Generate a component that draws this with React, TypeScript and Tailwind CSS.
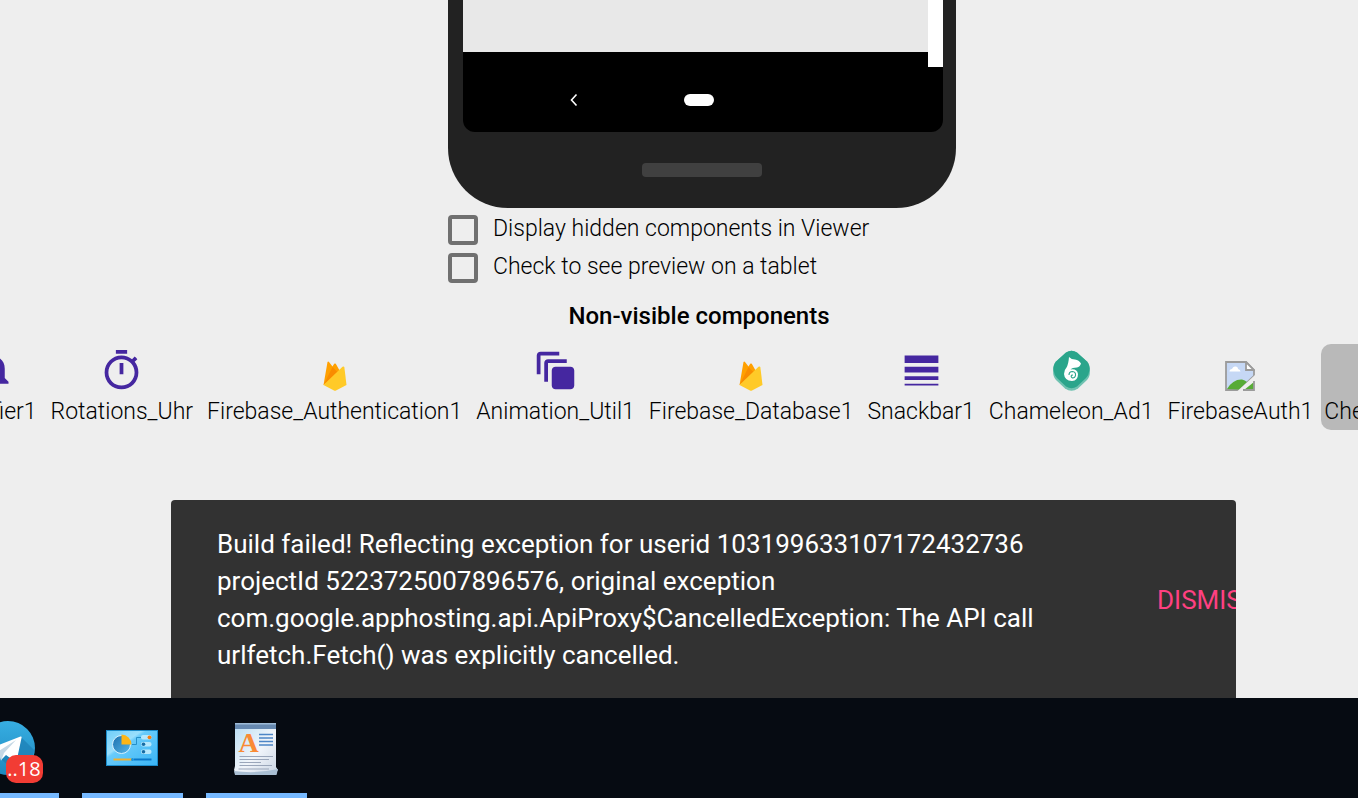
import React from 'react';

type IconProps = { className?: string };

function MaterialIcon({ d }: { d: string }) {
  return (
    <svg viewBox="0 0 24 24" className="h-[45px] w-[45px] fill-[#4527a0]" aria-hidden="true">
      <path d={d} />
    </svg>
  );
}

function FirebaseIcon() {
  return (
    <svg viewBox="0 0 30 30" className="h-[30px] w-[30px]" aria-hidden="true">
      <path d="M3.500 24 7.500 1Q8.200 -.2 9.200 1.200L12.500 5.500L14.200 2.800Q15 2 15.800 2.800L19 8.500L22 12Z" fill="#ffa000" />
      <path d="M3.500 24 12.500 6 17.500 11Z" fill="#f98c00" />
      <path d="M3.500 24 22.500 5.800Q24 4.800 24.400 6.500L26.500 24 16 29.500Q15 30 14 29.500Z" fill="#ffca28" />
    </svg>
  );
}

function ChameleonIcon() {
  return (
    <svg viewBox="0 0 45 45" className="h-[45px] w-[45px]" aria-hidden="true">
      <path d="M17 4.500Q22.500 .8 28 4.500L38 13.500Q41 17 41 23Q41 29 38 32L29 40.500Q22.500 45 16 40.500L7 32Q4 29 4 23Q4 17 7 13.500Z" fill="#6fc2b1" />
      <path d="M17 4.500Q22.500 .8 28 4.500L38 13.500Q41 17 40.500 22Q40 27 37 30L28 38.500Q22.500 42 17 38.500L8 30Q5 27 4.500 22Q4 17 7 13.500Z" fill="#2aa58b" />
      <path d="M20 9Q22.500 11.500 26 11.500Q30 12 32 15.500Q31 19 28 19.500Q23 19.500 21.500 21.500Q28 20.500 29 26Q29 32.500 23 33Q15.500 32.500 15 26Q15 22 17.500 19.500Q19.500 16 20 9Z" fill="#fff" />
      <path d="M20 27Q20 23.500 23.500 23.500Q27 24 26.500 27.500Q26 30 23.500 30Q21.500 29 22.500 27.200L24 27" fill="none" stroke="#2aa58b" strokeWidth="1.100" />
    </svg>
  );
}

function BrokenImageIcon() {
  return (
    <svg viewBox="0 0 30 30" className="h-[30px] w-[30px]" aria-hidden="true">
      <path d="M1 1H21L29 9V15L14 29H1Z" fill="#c6d8f5" stroke="#9b9b9b" strokeWidth="1.8" />
      <path d="M2 28Q8 18 17 18.500Q20 19 22 21L14 28.500Z" fill="#57ab36" />
      <path d="M4.500 10.500Q4.500 8 7 8Q8 5 10.500 5.500Q13 5.500 13 8Q15.500 8.500 15.500 10.500Z" fill="#fff" />
      <path d="M21 1V9H29Z" fill="#fff" stroke="#9b9b9b" strokeWidth="1.8" />
      <path d="M30 14 12.500 30H18.500L30 20Z" fill="#eee" />
      <path d="M29 21V29H19Z" fill="#57ab36" />
      <path d="M29 20V29H18" fill="none" stroke="#9b9b9b" strokeWidth="1.8" />
    </svg>
  );
}

function TelegramIcon({ className }: IconProps) {
  return (
    <svg viewBox="0 0 54 54" className={className} aria-hidden="true">
      <defs>
        <linearGradient id="telegram" x2="0" y2="1">
          <stop stopColor="#37aee2" />
          <stop offset="1" stopColor="#1e88be" />
        </linearGradient>
      </defs>
      <circle cx="27" cy="27" r="27" fill="url(#telegram)" />
      <path d="M40 16 53 29Q51 45 35 52L20 38Z" fill="#1c7fb5" opacity=".7" />
      <path d="M10 27 39.500 15.500Q41 15 40.500 17L36 38Q35 41 32 39L25 34L20 39L18 30Z" fill="#fff" />
      <path d="M18 30 35 19 23 32 20 40Z" fill="#c5d8e5" />
    </svg>
  );
}

function ControlPanelIcon() {
  return (
    <svg viewBox="0 0 52 36" className="h-9 w-[52px]" aria-hidden="true">
      <defs>
        <linearGradient id="panel" x2="1" y2="1">
          <stop stopColor="#6fcdf8" />
          <stop offset=".35" stopColor="#9adffc" />
          <stop offset=".4" stopColor="#68cbfa" />
          <stop offset="1" stopColor="#39b4f5" />
        </linearGradient>
        <linearGradient id="pie" x2="1" y2="1">
          <stop stopColor="#1c6fae" />
          <stop offset="1" stopColor="#55b7e8" />
        </linearGradient>
      </defs>
      <rect x=".5" y=".5" width="51" height="35" fill="url(#panel)" stroke="#1a8bc9" />
      <circle cx="15.500" cy="14.500" r="9" fill="url(#pie)" stroke="#d8f1fd" />
      <path d="M15.500 14.500V4.500A10 10 0 0 1 25.500 14.500Z" fill="#fdb515" />
      <path d="M26 14.500H30.500V7.500H35" fill="none" stroke="#2590c9" />
      <rect x="35" y="5" width="10.500" height="4.500" rx="2" fill="#b5e7fc" />
      <circle cx="43.500" cy="7.300" r="1.900" fill="#f57c10" />
      <rect x="35" y="12" width="10.500" height="4.500" rx="2" fill="#b5e7fc" />
      <circle cx="37.500" cy="14.300" r="1.800" fill="#176da5" />
      <rect x="35" y="19.500" width="10.500" height="4.500" rx="2" fill="#b5e7fc" />
      <circle cx="37.500" cy="21.800" r="1.800" fill="#176da5" />
      <path d="M7.500 29.500H26" stroke="#f3b02d" strokeWidth="2" />
      <path d="M28 29.500H45.500" stroke="#0a78c9" strokeWidth="2" />
      <circle cx="26.500" cy="29.500" r="1.500" fill="#1793e0" />
    </svg>
  );
}

function WordPadIcon() {
  return (
    <svg viewBox="0 0 44 54" className="h-[54px] w-11" aria-hidden="true">
      <defs>
        <linearGradient id="page" x2="1" y2="1">
          <stop stopColor="#b6dcf3" />
          <stop offset=".55" stopColor="#f1f5fa" />
          <stop offset="1" stopColor="#c9d5e4" />
        </linearGradient>
      </defs>
      <path d="M1 2H42V46L44 49Q42 50 42 53H1Q1 50 0 49L1 45Z" fill="url(#page)" />
      <path d="M1 2H42V8H1Z" fill="#6689b0" />
      <path d="M1 2H42V3.500H1Z" fill="#9dbbd6" />
      <path d="M0 50Q22 53 44 48L42.500 54H1Z" fill="#a9bfd3" />
      <text x="14.500" y="31" textAnchor="middle" fontFamily="Liberation Serif, serif" fontWeight="700" fontSize="28" fill="#f98a35">A</text>
      <path d="M25 13.500H39M25 17H39M25 20.500H39M25 24H39" stroke="#4d86c6" strokeWidth="1.500" />
      <path d="M5.500 35.500H39M5.500 38.500H35M5.500 41.500H27M5.500 44.500H38M4.500 48H35" stroke="#9aa6ba" strokeWidth="1.200" />
    </svg>
  );
}

const components = [
  {
    name: 'Notifier1',
    icon: <MaterialIcon d="M18 16v-5c0-3.070-1.630-5.640-4.500-6.320V4c0-.83-.67-1.500-1.500-1.500s-1.500.67-1.500 1.500v.68C7.640 5.360 6 7.920 6 11v5l-2 2v1h16v-1l-2-2z" />,
  },
  {
    name: 'Rotations_Uhr',
    icon: <MaterialIcon d="M15 1H9v2h6V1zm-4 13h2V8h-2v6zm8.030-6.610l1.420-1.420c-.43-.51-.9-.99-1.410-1.410l-1.420 1.420C16.070 4.740 14.120 4 12 4c-4.970 0-9 4.030-9 9s4.020 9 9 9 9-4.030 9-9c0-2.120-.74-4.070-1.970-5.610zM12 20c-3.870 0-7-3.130-7-7s3.130-7 7-7 7 3.130 7 7-3.130 7-7 7z" />,
  },
  { name: 'Firebase_Authentication1', icon: <FirebaseIcon />, small: true },
  {
    name: 'Animation_Util1',
    icon: <MaterialIcon d="M14 2H4c-1.110 0-2 .9-2 2v10h2V4h10V2zm4 4H8c-1.110 0-2 .9-2 2v10h2V8h10V6zm2 4h-8c-1.110 0-2 .9-2 2v8c0 1.100.89 2 2 2h8c1.100 0 2-.9 2-2v-8c0-1.100-.9-2-2-2z" />,
  },
  { name: 'Firebase_Database1', icon: <FirebaseIcon />, small: true },
  {
    name: 'Snackbar1',
    icon: <MaterialIcon d="M3 17h18v-2H3v2zm0 3h18v-1H3v1zm0-7h18v-3H3v3zm0-9v4h18V4H3z" />,
  },
  { name: 'Chameleon_Ad1', icon: <ChameleonIcon /> },
  { name: 'FirebaseAuth1', icon: <BrokenImageIcon />, small: true },
  { name: 'Checkbox1', icon: null, selected: true },
];

const previewOptions = [
  { id: 'show-hidden', label: 'Display hidden components in Viewer' },
  { id: 'tablet-preview', label: 'Check to see preview on a tablet' },
];

function Phone() {
  return (
    <div className="h-[208px] rounded-b-[60px] bg-[#222] pl-[15px] pr-[13px]">
      <div className="overflow-hidden rounded-b-xl bg-black">
        <div className="flex items-start">
          <div className="h-[52px] flex-1 bg-[#e8e8e8]" />
          <div className="h-[67px] w-[15px] bg-white" />
        </div>
        <div className="flex h-[65px] items-center pl-[106px]">
          <button aria-label="Back" className="w-[10px]">
            <svg viewBox="0 0 10 14" className="h-[14px] w-[10px]" fill="none" stroke="#fff" strokeWidth="1.600">
              <path d="M7.500 1.500 2.500 7 7.500 12.500" />
            </svg>
          </button>
          <button aria-label="Home" className="ml-[105px] h-3 w-[30px] rounded-full bg-white" />
        </div>
      </div>
      <div className="ml-[179px] mt-[31px] h-[14px] w-[120px] rounded bg-[#404040]" />
    </div>
  );
}

function ComponentTray() {
  return (
    <ul className="mt-3 flex gap-[2px] overflow-hidden">
      {components.map((c) => (
        <li
          key={c.name}
          className={`flex h-[86px] shrink-0 flex-col items-center rounded-[10px] pt-1 first:-ml-[56px] ${c.selected ? 'bg-[#b9b9b9] px-[3px]' : 'px-[6px]'}`}
        >
          <div className={`flex h-[45px] items-end ${c.small ? 'pb-[2px]' : ''}`}>{c.icon}</div>
          <span className="mt-[5px] text-[23px] leading-7">{c.name}</span>
        </li>
      ))}
    </ul>
  );
}

function Snackbar() {
  return (
    <div role="alert" className="ml-[171px] mr-[122px] flex h-[198px] items-center overflow-hidden rounded-t bg-[#323232] pl-[46px] pt-[2px] text-[26px] font-normal">
      <p className="w-[895px] shrink-0 leading-[37px] text-white">
        Build failed! Reflecting exception for userid 103199633107172432736 projectId 5223725007896576, original
        exception com.google.apphosting.api.ApiProxy$CancelledException: The API call urlfetch.Fetch() was explicitly
        cancelled.
      </p>
      <button className="ml-[45px] shrink-0 text-[#ff4081]">DISMISS</button>
    </div>
  );
}

function Taskbar() {
  const item = 'flex h-full w-[101px] shrink-0 items-center justify-center border-b-[5px] border-[#76b9ff] pt-[5px] pr-[2px]';
  return (
    <nav className="flex h-[100px] gap-[23px] overflow-hidden bg-[#060b12]">
      <button aria-label="Telegram" className={`${item} -ml-[42px]`}>
        <span className="relative">
          <TelegramIcon className="h-[54px] w-[54px]" />
          <span className="absolute left-[25px] top-[34px] flex h-7 w-[37px] items-center justify-center rounded-[10px] bg-[#f23c34] font-['Open_Sans',sans-serif] text-[20px] font-normal text-white">
            ..18
          </span>
        </span>
      </button>
      <button aria-label="Control panel" className={item}>
        <ControlPanelIcon />
      </button>
      <button aria-label="WordPad" className={item}>
        <WordPadIcon />
      </button>
    </nav>
  );
}

export default function App() {
  return (
    <div className="flex min-h-screen flex-col overflow-hidden bg-[#eee] font-[Roboto,sans-serif] font-light text-black">
      <main className="flex-1">
        <div className="ml-[46px]">
          <section className="mx-auto max-w-[508px]">
            <Phone />
            <div className="mt-[7px] flex flex-col gap-2">
              {previewOptions.map((o) => (
                <div key={o.id} className="flex h-[30px] items-start gap-[15px]">
                  <input
                    id={o.id}
                    type="checkbox"
                    className="h-[30px] w-[30px] shrink-0 appearance-none rounded border-4 border-[#707070] checked:bg-[#707070]"
                  />
                  <label htmlFor={o.id} className="text-[23px] leading-7">{o.label}</label>
                </div>
              ))}
            </div>
            <h2 className="mr-[6px] mt-[17px] text-center text-[24px] font-medium leading-8">Non-visible components</h2>
          </section>
        </div>
        <ComponentTray />
      </main>
      <Snackbar />
      <Taskbar />
    </div>
  );
}
